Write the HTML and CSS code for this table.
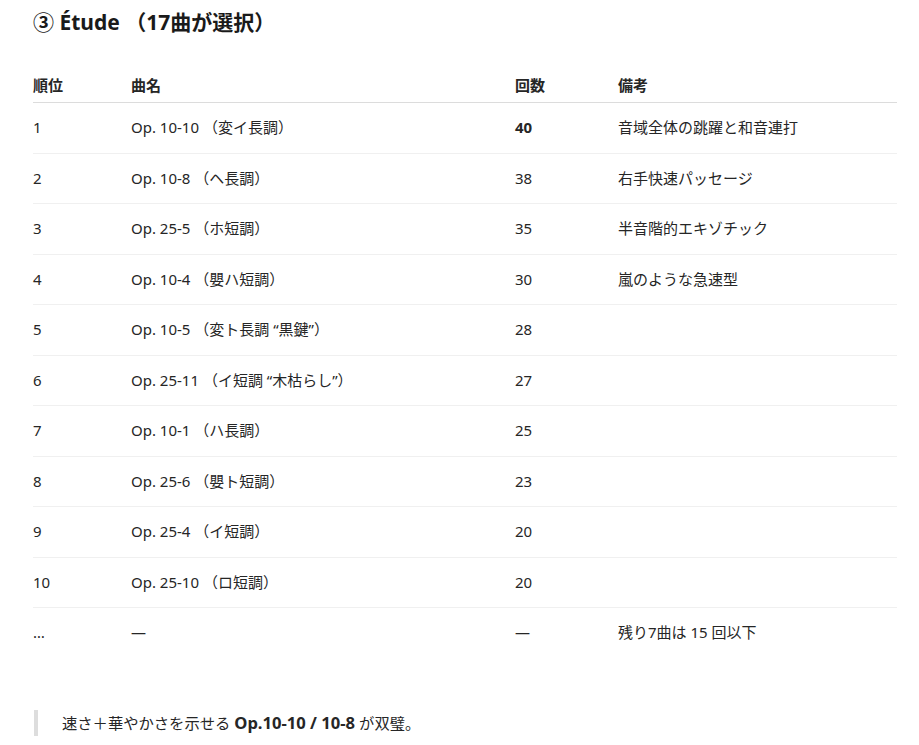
FILE: index.html
```html
<!DOCTYPE html>
<html lang="ja">
<head>
<meta charset="utf-8">
<link rel="stylesheet" href="styles.css">
</head>
<body>
<main class="page">
  <h3 class="title">③ Étude （17曲が選択）</h3>
  <table class="rank">
    <thead>
      <tr><th class="c1">順位</th><th class="c2">曲名</th><th class="c3">回数</th><th class="c4">備考</th></tr>
    </thead>
    <tbody>
      <tr><td>1</td><td>Op. 10-10 （変イ長調）</td><td><strong>40</strong></td><td>音域全体の跳躍と和音連打</td></tr>
      <tr><td>2</td><td>Op. 10-8 （ヘ長調）</td><td>38</td><td>右手快速パッセージ</td></tr>
      <tr><td>3</td><td>Op. 25-5 （ホ短調）</td><td>35</td><td>半音階的エキゾチック</td></tr>
      <tr><td>4</td><td>Op. 10-4 （嬰ハ短調）</td><td>30</td><td>嵐のような急速型</td></tr>
      <tr><td>5</td><td>Op. 10-5 （変ト長調 “黒鍵”）</td><td>28</td><td></td></tr>
      <tr><td>6</td><td>Op. 25-11 （イ短調 “木枯らし”）</td><td>27</td><td></td></tr>
      <tr><td>7</td><td>Op. 10-1 （ハ長調）</td><td>25</td><td></td></tr>
      <tr><td>8</td><td>Op. 25-6 （嬰ト短調）</td><td>23</td><td></td></tr>
      <tr><td>9</td><td>Op. 25-4 （イ短調）</td><td>20</td><td></td></tr>
      <tr><td>10</td><td>Op. 25-10 （ロ短調）</td><td>20</td><td></td></tr>
      <tr class="last"><td>…</td><td>—</td><td>—</td><td>残り7曲は 15 回以下</td></tr>
    </tbody>
  </table>
  <blockquote class="note">速さ＋華やかさを示せる <strong>Op.10-10 / 10-8</strong> が双璧。</blockquote>
</main>
</body>
</html>
```
FILE: styles.css
```css
html, body {
  margin: 0;
  padding: 0;
  background: #ffffff;
}
body {
  font-family: "Noto Sans", "Noto Sans CJK JP", sans-serif;
  color: #262626;
  font-size: 15px;
}
.page {
  padding: 3px 22px 0 33px;
}
.title {
  margin: 0 0 26px 0;
  font-size: 21px;
  font-weight: 700;
  line-height: 38px;
  color: #1a1a1a;
}
.rank {
  width: 864px;
  border-collapse: collapse;
}
.rank th {
  text-align: left;
  font-weight: 700;
  padding: 6px 0 5px 0;
  line-height: 24px;
  border-bottom: 1px solid #dcdcdc;
}
.rank td {
  padding: 13px 0;
  line-height: 23.5px;
  border-bottom: 1px solid #f0f0f0;
}
.rank tr.last td {
  border-bottom: none;
}
.c1 { width: 98px; }
.c2 { width: 384px; }
.c3 { width: 103px; }
.rank strong { font-weight: 700; }
.note {
  margin: 52px 0 0 1px;
  padding: 0 0 0 24px;
  border-left: 4px solid #dddddd;
  line-height: 26px;
  font-size: 15.3px;
}
.note strong {
  font-weight: 700;
  font-size: 16.6px;
}
```
